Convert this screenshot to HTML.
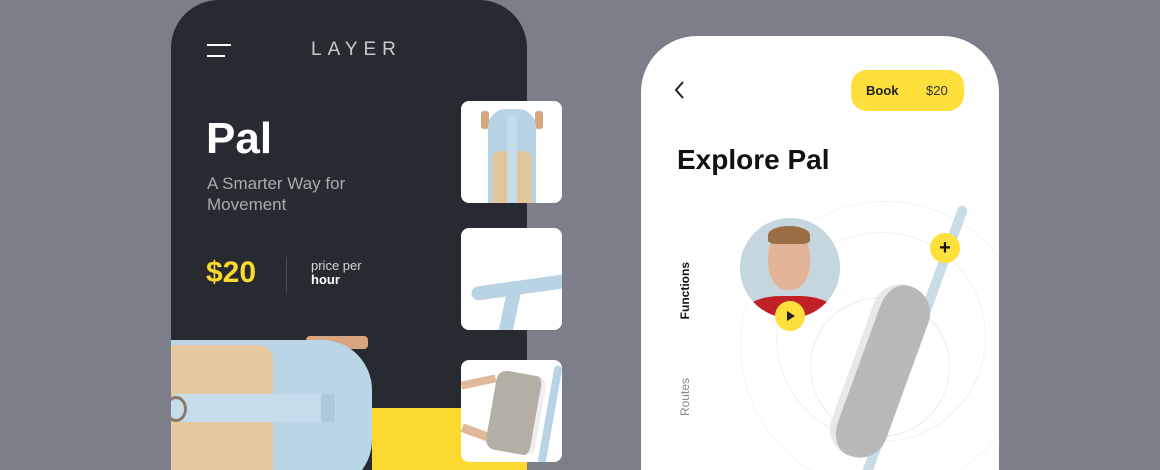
<!DOCTYPE html>
<html><head><meta charset="utf-8"><style>
*{margin:0;padding:0;box-sizing:border-box}
html,body{width:1160px;height:470px;overflow:hidden}
body{background:#7c7f89;position:relative;font-family:"Liberation Sans",sans-serif}
.abs{position:absolute}
.dark{left:171px;top:0;width:356px;height:470px;background:#272a31;border-radius:48px 48px 0 0;overflow:hidden}
.thumb{position:absolute;left:461px;width:101px;height:102px;background:#fff;border-radius:8px;overflow:hidden}
.white{left:641px;top:36px;width:358px;height:434px;background:#fff;border-radius:56px 56px 0 0;overflow:hidden}
.vt{position:absolute;writing-mode:vertical-rl;transform:rotate(180deg);font-size:12px;white-space:nowrap}
</style></head><body>
<div class="abs dark">
  <div class="abs" style="left:201px;top:408px;width:160px;height:70px;background:#fcd92e"></div>
  <div class="abs" style="left:36px;top:44px;width:24px;height:2px;background:#fff"></div>
  <div class="abs" style="left:36px;top:55px;width:18px;height:2px;background:#fff"></div>
  <div class="abs" style="left:140px;top:39px;font-size:19px;letter-spacing:6px;color:#c9cacd">LAYER</div>
  <div class="abs" style="left:35px;top:114px;font-size:44px;font-weight:bold;color:#fff">Pal</div>
  <div class="abs" style="left:36px;top:173px;font-size:17px;line-height:21px;color:#a9abaf">A Smarter Way for<br>Movement</div>
  <div class="abs" style="left:35px;top:256px;font-size:30px;font-weight:bold;color:#fcd92e">$20</div>
  <div class="abs" style="left:115px;top:257px;width:1px;height:36px;background:#4a4d54"></div>
  <div class="abs" style="left:140px;top:259px;font-size:13px;line-height:14px;color:#d7d8da">price per<br><b style="color:#fff">hour</b></div>
  <div class="abs" style="left:135px;top:336px;width:62px;height:13px;background:#d9a57f;border-radius:4px"></div>
  <div class="abs" style="left:-30px;top:340px;width:231px;height:150px;background:#b9d5e6;border-radius:0 50px 50px 0"></div>
  <div class="abs" style="left:0;top:345px;width:102px;height:130px;background:#e7c9a1;border-radius:0 14px 0 0"></div>
  <div class="abs" style="left:0;top:394px;width:165px;height:28px;background:#c5dcea;border-radius:6px"></div>
  <div class="abs" style="left:150px;top:394px;width:14px;height:28px;background:#adc8d8;border-radius:3px"></div>
  <div class="abs" style="left:-6px;top:396px;width:22px;height:26px;border:3px solid #8a7966;border-radius:50%"></div>
</div>
<div class="thumb" style="top:101px">
  <div class="abs" style="left:20px;top:10px;width:8px;height:18px;background:#d9a57f;border-radius:3px"></div>
  <div class="abs" style="left:74px;top:10px;width:8px;height:18px;background:#d9a57f;border-radius:3px"></div>
  <div class="abs" style="left:27px;top:8px;width:48px;height:100px;background:#b8d3e4;border-radius:18px 18px 0 0"></div>
  <div class="abs" style="left:31px;top:50px;width:40px;height:55px;background:#e3c59d;border-radius:8px 8px 0 0"></div>
  <div class="abs" style="left:46px;top:15px;width:10px;height:90px;background:#c6dcea;border-radius:4px"></div>
</div>
<div class="thumb" style="top:228px">
  <div class="abs" style="left:10px;top:52px;width:105px;height:14px;background:#b8d3e4;border-radius:7px;transform:rotate(-8deg)"></div>
  <div class="abs" style="left:42px;top:60px;width:14px;height:45px;background:#b8d3e4;transform:rotate(12deg)"></div>
</div>
<div class="thumb" style="top:360px">
  <div class="abs" style="left:0;top:18px;width:35px;height:8px;background:#e2b89a;transform:rotate(-12deg)"></div>
  <div class="abs" style="left:0;top:70px;width:40px;height:9px;background:#e2b89a;transform:rotate(20deg)"></div>
  <div class="abs" style="left:30px;top:13px;width:50px;height:80px;background:#b3aea6;border-radius:10px;border-right:5px solid #eee;transform:rotate(10deg)"></div>
  <div class="abs" style="left:85px;top:5px;width:8px;height:100px;background:#b8d3e4;border-radius:4px;transform:rotate(10deg)"></div>
</div>
<div class="abs white">
  <svg class="abs" style="left:32px;top:44px" width="14" height="20"><path d="M10 2 L3 10 L10 18" fill="none" stroke="#222" stroke-width="2"/></svg>
  <div class="abs" style="left:210px;top:34px;width:113px;height:41px;background:#fedf3b;border-radius:16px"></div>
  <div class="abs" style="left:225px;top:47px;font-size:13px;font-weight:bold;color:#222">Book</div>
  <div class="abs" style="left:285px;top:47px;font-size:13px;color:#333">$20</div>
  <div class="abs" style="left:36px;top:108px;font-size:28px;font-weight:bold;color:#111">Explore Pal</div>
  <div class="vt" style="left:37px;top:226px;font-weight:bold;color:#111">Functions</div>
  <div class="vt" style="left:37px;top:342px;color:#888">Routes</div>
  <div class="abs" style="left:169px;top:261px;width:140px;height:140px;border:1px solid #ececec;border-radius:50%"></div>
  <div class="abs" style="left:135px;top:196px;width:210px;height:210px;border:1px solid #f0f0f0;border-radius:50%"></div>
  <div class="abs" style="left:99px;top:165px;width:290px;height:290px;border:1px solid #f3f3f3;border-radius:50%"></div>
  <div class="abs" style="left:318px;top:170px;width:10px;height:300px;background:#c8dbe6;border-radius:6px;transform:rotate(20deg);transform-origin:top"></div>
  <div class="abs" style="left:210px;top:245px;width:58px;height:180px;background:#b9b9b9;border-radius:28px;border-left:7px solid #e8e8e8;transform:rotate(20deg)"></div>
  <div class="abs" style="left:99px;top:182px;width:100px;height:100px;border-radius:50%;background:#c6d6de;overflow:hidden">
    <div class="abs" style="left:28px;top:12px;width:42px;height:60px;background:#e2b497;border-radius:45%;"></div>
    <div class="abs" style="left:28px;top:8px;width:42px;height:18px;background:#9a6d45;border-radius:50% 50% 20% 20%"></div>
    <div class="abs" style="left:5px;top:78px;width:90px;height:40px;background:#c02127;border-radius:40%"></div>
  </div>
  <div class="abs" style="left:134px;top:265px;width:30px;height:30px;border-radius:50%;background:#fedf3b"></div>
  <svg class="abs" style="left:145px;top:275px" width="10" height="10"><path d="M1 0 L9 5 L1 10Z" fill="#222"/></svg>
  <div class="abs" style="left:289px;top:197px;width:30px;height:30px;border-radius:50%;background:#fedf3b;text-align:center;line-height:30px;font-size:20px;font-weight:bold;color:#111">+</div>
</div>
</body></html>
